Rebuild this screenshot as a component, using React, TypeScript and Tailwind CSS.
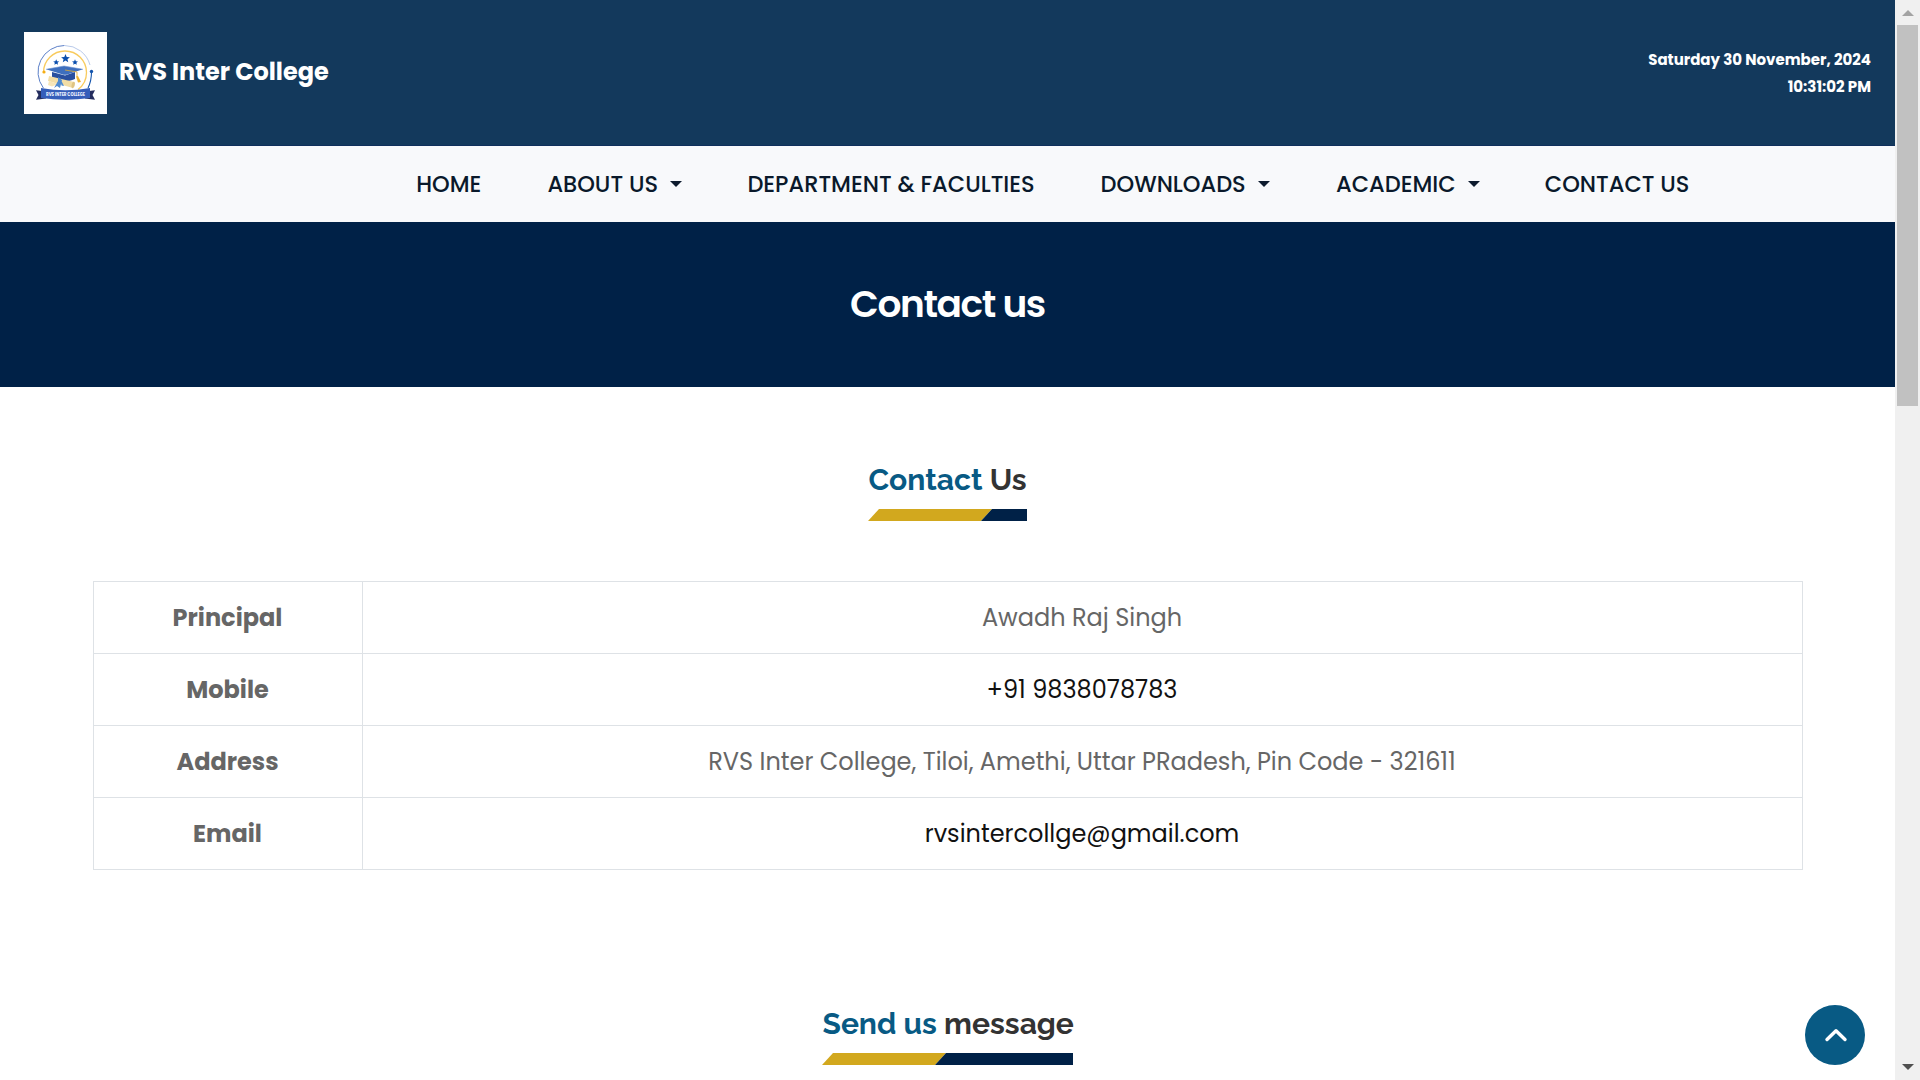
const navItems = [
  { label: "HOME", width: "w-[131.2px]", menu: false },
  { label: "ABOUT US", width: "w-[200px]", menu: true },
  { label: "DEPARTMENT & FACULTIES", width: "w-[353.2px]", menu: false },
  { label: "DOWNLOADS", width: "w-[235.4px]", menu: true },
  { label: "ACADEMIC", width: "w-[208.8px]", menu: true },
  { label: "CONTACT US", width: "w-[150px]", menu: false },
];

const contactRows = [
  { label: "Principal", value: "Awadh Raj Singh", color: "text-[#666666]" },
  { label: "Mobile", value: "+91 9838078783", color: "text-[#111111]" },
  { label: "Address", value: "RVS Inter College, Tiloi, Amethi, Uttar PRadesh, Pin Code - 321611", color: "text-[#666666]" },
  { label: "Email", value: "rvsintercollge@gmail.com", color: "text-[#111111]" },
];

function Star({ x, y, r }: { x: number; y: number; r: number }) {
  return (
    <path
      transform={`translate(${x} ${y}) scale(${r})`}
      fill="#0b4fae"
      d="M0-1 .28-.34 1-.3.45.17.62.85 0 .48-.62.85-.45.17-1-.3-.28-.34Z"
    />
  );
}

function Logo() {
  return (
    <svg className="h-[82px] w-[83px] shrink-0 bg-white" viewBox="0 0 83 82" fill="none">
      <path d="M19.4 56A26.5 26.5 0 0 1 40.5 13.5" stroke="#5c80c8" strokeWidth="1" />
      <path d="M40.5 13.5A26.5 26.5 0 0 1 66 33" stroke="#b9caea" strokeWidth="1" />
      <path d="M67.5 40C67.5 47 66 52 64 56" stroke="#1555ad" strokeWidth="1.1" />
      <circle cx="67.5" cy="39.5" r="1.7" fill="#1555ad" />
      <path d="M19.5 40.5A21.5 21.5 0 0 1 62.5 40.5A21.5 21.5 0 0 1 54 57.6" stroke="#f8cb5e" strokeWidth="1.3" />
      <circle cx="20" cy="40" r="1.6" fill="#f5ae14" />
      <Star x={41.5} y={26.5} r={4.4} />
      <Star x={32.2} y={30.3} r={3} />
      <Star x={51} y={30.3} r={3} />
      <path d="M28 40 41 43.5 51 40V47C44 50 35 50 28 47Z" fill="#284f9f" />
      <path d="M22 37.3 40 34 59 37.3 44 42.3C42 43 40 43 38 42.3Z" fill="#3e6fbe" />
      <path d="M22 37.3 40 34 59 37.3" stroke="#6e95d3" strokeWidth=".6" />
      <path d="M41 38 53 40V45" stroke="#e5aa2c" strokeWidth=".8" />
      <path d="M52 44.5 54 44 57 50 54 50.5Z" fill="#edb436" />
      <path d="M25 44 50 50 49 56 24 49Z" fill="#f2dda5" />
      <ellipse cx="49.2" cy="53" rx="1.6" ry="3.2" fill="#dfc484" transform="rotate(12 49.2 53)" />
      <path d="M25 49 34 52 28 54.5 24 53Z" fill="#f6e5b8" />
      <path d="M34 45 38 48 36 56 33 54 30 56 34 49Z M36 46 40 54 37.5 53.5" fill="#4f8ad0" />
      <path d="M12 58.3 22 59.5V66.5L12 67.7 14.5 63Z M71 58.3 61 59.5V66.5L71 67.7 68.5 63Z" fill="#242d5e" />
      <path d="M17 56Q41.5 60.5 66 56V66Q41.5 69.6 17 66Z" fill="#355eba" />
      <text
        x="41.5"
        y="64.3"
        textAnchor="middle"
        textLength="39"
        lengthAdjust="spacingAndGlyphs"
        fill="#eef3ff"
        fontFamily="Poppins, Inter, sans-serif"
        fontSize="4.8"
        fontWeight="700"
      >
        RVS INTER COLLEGE
      </text>
    </svg>
  );
}

function Caret() {
  return <span className="-mt-0.5 h-0 w-0 border-x-[6px] border-t-[6px] border-x-transparent border-t-[#0d1b2e]" />;
}

function SectionHeading({ accent, rest, width }: { accent: string; rest: string; width: string }) {
  return (
    <div className={`mx-auto flex flex-col ${width}`}>
      <h2 className="h-10 pl-[0.5px] whitespace-nowrap font-[Raleway,Inter,sans-serif] text-[30px] leading-10 font-bold text-[#333333]">
        <span className="text-[#085a84]">{accent}</span> {rest}
      </h2>
      <div className="mt-[9px] flex h-3">
        <div className="w-[124px] shrink-0 bg-[#d2a81e] [clip-path:polygon(11px_0,100%_0,calc(100%-11px)_100%,0_100%)]" />
        <div className="-ml-[11px] flex-1 bg-[#002147] [clip-path:polygon(11px_0,100%_0,100%_100%,0_100%)]" />
      </div>
    </div>
  );
}

function Scrollbar() {
  return (
    <div className="flex h-full w-[25px] shrink-0 flex-col items-center bg-[#f0f0f0]">
      <div className="flex h-[25px] items-center justify-center">
        <span className="h-0 w-0 border-x-[6px] border-b-[6px] border-x-transparent border-b-[#a3a3a3]" />
      </div>
      <div className="h-[381px] w-[21px] bg-[#c1c1c1]" />
      <div className="mt-auto flex h-[25px] items-center justify-center">
        <span className="-mt-0.5 h-0 w-0 border-x-[6px] border-t-[6px] border-x-transparent border-t-[#505050]" />
      </div>
    </div>
  );
}

export default function App() {
  return (
    <div className="flex h-screen w-full overflow-hidden bg-white font-[Poppins,Inter,sans-serif]">
      <div className="relative h-full min-w-0 flex-1 overflow-hidden">
        <header className="flex h-[146px] items-center justify-between border-b border-[#0f2f5c] bg-[#13395c] px-6 text-white">
          <div className="flex items-center gap-3">
            <Logo />
            <h1 className="mb-0.5 text-2xl leading-8 font-bold">RVS Inter College</h1>
          </div>
          <div className="flex flex-col items-end text-[15px] leading-[27px] font-bold">
            <span>Saturday 30 November, 2024</span>
            <span>10:31:02 PM</span>
          </div>
        </header>

        <nav className="flex h-[76px] items-center bg-[#f8f9fb] pt-0.5 pl-[416.2px] text-[22.5px] font-medium text-[#0a192b]">
          {navItems.map((item) => (
            <a key={item.label} className={`flex shrink-0 items-center gap-3 whitespace-nowrap ${item.width}`}>
              {item.label}
              {item.menu && <Caret />}
            </a>
          ))}
        </nav>

        <section className="flex h-[165px] items-center justify-center bg-[#002147]">
          <h2 className="mb-0.5 text-[37.5px] leading-[44px] font-semibold tracking-[-1.4px] text-white">Contact us</h2>
        </section>

        <section className="pt-[73px]">
          <SectionHeading accent="Contact" rest="Us" width="w-[159px]" />
          <table className="mt-[60px] ml-[93px] w-[1710px] table-fixed border-collapse text-center text-2xl leading-9">
            <tbody>
              {contactRows.map((row) => (
                <tr key={row.label} className="h-[72px]">
                  <th className="w-[269px] border border-[#dee2e6] py-0 pr-px pl-0 font-bold text-[#666666]">{row.label}</th>
                  <td className={`border border-[#dee2e6] py-0 pr-px pl-0 ${row.color}`}>{row.value}</td>
                </tr>
              ))}
            </tbody>
          </table>
        </section>

        <section className="pt-[134px]">
          <SectionHeading accent="Send us" rest="message" width="w-[251px]" />
        </section>

        <button className="absolute right-[30px] bottom-[15px] flex size-[60px] items-center justify-center rounded-full bg-[#085a84]">
          <svg className="mb-px ml-0.5 h-4 w-6" viewBox="0 0 24 16" fill="none" stroke="white" strokeWidth="3.4" strokeLinecap="round" strokeLinejoin="round">
            <path d="M3 12.5 12 3.7 21 12.5" />
          </svg>
        </button>
      </div>
      <Scrollbar />
    </div>
  );
}
